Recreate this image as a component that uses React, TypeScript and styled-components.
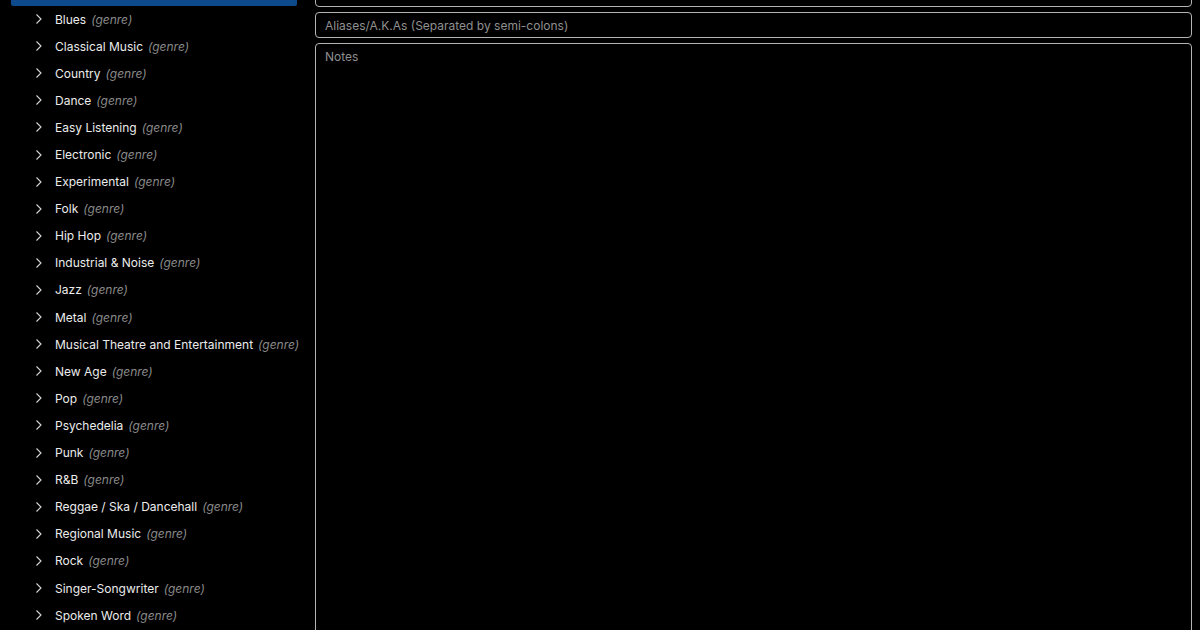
import React from "react";
import styled, { createGlobalStyle } from "styled-components";

const Global = createGlobalStyle`
  html, body { margin: 0; padding: 0; background: #000; overflow: hidden; }
  body { font-family: Inter, "Noto Sans", sans-serif; color: #f2f2f2; }
  * { box-sizing: border-box; }
`;

const Page = styled.div`
  display: flex;
  width: 1200px;
  height: 630px;
  background: #000;
  overflow: hidden;
`;

const Sidebar = styled.div`
  width: 315px;
  flex: none;
  display: flex;
  flex-direction: column;
  padding: 0 18px 0 11px;
`;

const SelectedBar = styled.div`
  height: 5.5px;
  background: #0d4a8b;
  border-radius: 0 0 2px 2px;
  flex: none;
`;

const Row = styled.div`
  display: flex;
  align-items: center;
  height: 27.1px;
  flex: none;
  padding-left: 24px;
  font-size: 12px;
  white-space: nowrap;
`;

const Chevron = styled.svg`
  width: 8px;
  height: 12px;
  margin-right: 12px;
  flex: none;
`;

const Name = styled.span`
  color: #ececec;
`;

const Kind = styled.span`
  color: #8a8a8a;
  font-style: italic;
  margin-left: 5px;
`;

const Main = styled.div`
  flex: 1;
  display: flex;
  flex-direction: column;
  padding: 0 8px 0 0;
  margin-top: -19px;
  gap: 5px;
`;

const Field = styled.div<{ $h: number }>`
  height: ${(p) => p.$h}px;
  flex: none;
  border: 1.5px solid #b4b4b4;
  border-radius: 4px;
  padding: 0 9px;
  font-size: 12px;
  color: #8f8f8f;
  display: flex;
  align-items: ${(p) => (p.$h > 100 ? "flex-start" : "center")};
  padding-top: ${(p) => (p.$h > 100 ? "5px" : "0")};
`;

const genres = [
  "Blues",
  "Classical Music",
  "Country",
  "Dance",
  "Easy Listening",
  "Electronic",
  "Experimental",
  "Folk",
  "Hip Hop",
  "Industrial & Noise",
  "Jazz",
  "Metal",
  "Musical Theatre and Entertainment",
  "New Age",
  "Pop",
  "Psychedelia",
  "Punk",
  "R&B",
  "Reggae / Ska / Dancehall",
  "Regional Music",
  "Rock",
  "Singer-Songwriter",
  "Spoken Word",
];

export default function App() {
  return (
    <>
      <Global />
      <Page>
        <Sidebar>
          <SelectedBar />
          {genres.map((g) => (
            <Row key={g}>
              <Chevron viewBox="0 0 8 12">
                <path d="M1.5 1.5 L6 6 L1.5 10.5" fill="none" stroke="#d8d8d8" strokeWidth="1.1" />
              </Chevron>
              <Name>{g}</Name>
              <Kind>(genre)</Kind>
            </Row>
          ))}
        </Sidebar>
        <Main>
          <Field $h={26} />
          <Field $h={26}>Aliases/A.K.As (Separated by semi-colons)</Field>
          <Field $h={700}>Notes</Field>
        </Main>
      </Page>
    </>
  );
}
